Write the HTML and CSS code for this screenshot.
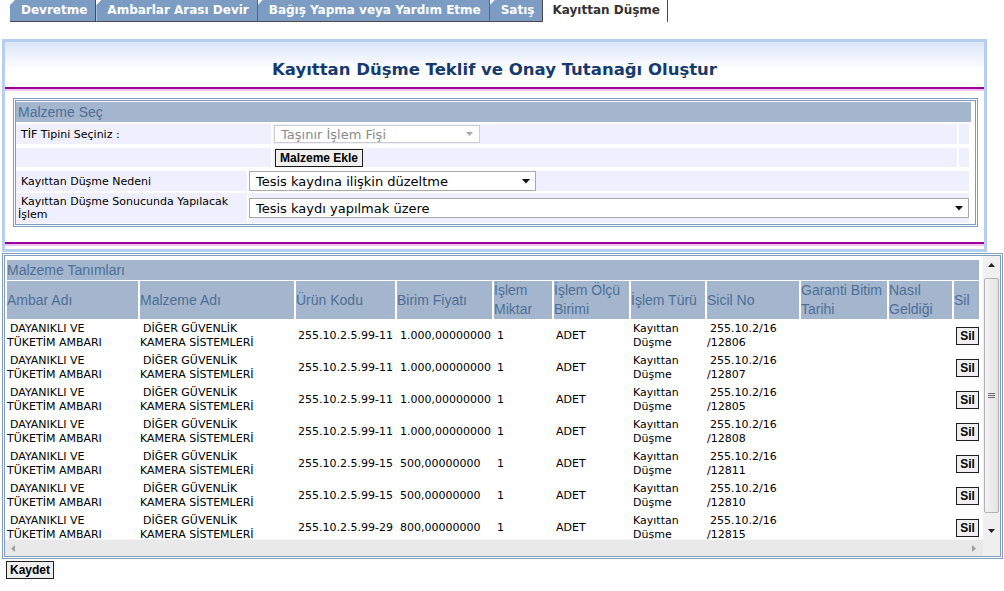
FILE: index.html
```html
<!DOCTYPE html>
<html lang="tr">
<head>
<meta charset="utf-8">
<title>Kayıttan Düşme</title>
<link rel="stylesheet" href="styles.css">
</head>
<body>
<div class="tabs">
  <div class="tab">Devretme</div>
  <div class="tab">Ambarlar Arası Devir</div>
  <div class="tab">Bağış Yapma veya Yardım Etme</div>
  <div class="tab">Satış</div>
  <div class="tab active">Kayıttan Düşme</div>
</div>

<div class="panel">
  <h1 class="title">Kayıttan Düşme Teklif ve Onay Tutanağı Oluştur</h1>
  <div class="rule"></div>
  <div class="box">
    <div class="box-head">Malzeme Seç</div>
    <div class="grid-a">
      <div class="cell label">TİF Tipini Seçiniz :</div>
      <div class="cell"><div class="select disabled sel-tif"><span>Taşınır İşlem Fişi</span><svg width="7" height="4" viewBox="0 0 7 4"><path d="M0 0h7L3.5 4z" fill="#a8a8a8"/></svg></div></div>
      <div class="cell"></div>
      <div class="cell"></div>
      <div class="cell"><button class="btn btn-add">Malzeme Ekle</button></div>
      <div class="cell"></div>
    </div>
    <div class="grid-b">
      <div class="cell label">Kayıttan Düşme Nedeni</div>
      <div class="cell"><div class="select sel-neden"><span>Tesis kaydına ilişkin düzeltme</span><svg width="8" height="5" viewBox="0 0 8 5"><path d="M0 0h8L4 4.5z" fill="#111"/></svg></div></div>
      <div class="cell label">Kayıttan Düşme Sonucunda Yapılacak İşlem</div>
      <div class="cell"><div class="select sel-wide"><span>Tesis kaydı yapılmak üzere</span><svg width="8" height="5" viewBox="0 0 8 5"><path d="M0 0h8L4 4.5z" fill="#111"/></svg></div></div>
    </div>
  </div>
  <div class="rule rule-bottom"></div>
</div>

<div class="list">
  <div class="scroll">
    <div class="viewport">
      <div class="table">
        <div class="table-title">Malzeme Tanımları</div>
        <div class="th">Ambar Adı</div>
        <div class="th">Malzeme Adı</div>
        <div class="th">Ürün Kodu</div>
        <div class="th">Birim Fiyatı</div>
        <div class="th">İşlem Miktar</div>
        <div class="th">İşlem Ölçü Birimi</div>
        <div class="th">İşlem Türü</div>
        <div class="th">Sicil No</div>
        <div class="th">Garanti Bitim Tarihi</div>
        <div class="th">Nasıl Geldiği</div>
        <div class="th">Sil</div>

        <div class="td ind">DAYANIKLI VE TÜKETİM AMBARI</div>
        <div class="td ind">DİĞER GÜVENLİK KAMERA SİSTEMLERİ</div>
        <div class="td nw p2">255.10.2.5.99-11</div>
        <div class="td nw p3">1.000,00000000</div>
        <div class="td p3">1</div>
        <div class="td p2">ADET</div>
        <div class="td p2">Kayıttan Düşme</div>
        <div class="td ind">255.10.2/16 /12806</div>
        <div class="td"></div>
        <div class="td"></div>
        <div class="td del"><button class="btn btn-sil">Sil</button></div>

        <div class="td ind">DAYANIKLI VE TÜKETİM AMBARI</div>
        <div class="td ind">DİĞER GÜVENLİK KAMERA SİSTEMLERİ</div>
        <div class="td nw p2">255.10.2.5.99-11</div>
        <div class="td nw p3">1.000,00000000</div>
        <div class="td p3">1</div>
        <div class="td p2">ADET</div>
        <div class="td p2">Kayıttan Düşme</div>
        <div class="td ind">255.10.2/16 /12807</div>
        <div class="td"></div>
        <div class="td"></div>
        <div class="td del"><button class="btn btn-sil">Sil</button></div>

        <div class="td ind">DAYANIKLI VE TÜKETİM AMBARI</div>
        <div class="td ind">DİĞER GÜVENLİK KAMERA SİSTEMLERİ</div>
        <div class="td nw p2">255.10.2.5.99-11</div>
        <div class="td nw p3">1.000,00000000</div>
        <div class="td p3">1</div>
        <div class="td p2">ADET</div>
        <div class="td p2">Kayıttan Düşme</div>
        <div class="td ind">255.10.2/16 /12805</div>
        <div class="td"></div>
        <div class="td"></div>
        <div class="td del"><button class="btn btn-sil">Sil</button></div>

        <div class="td ind">DAYANIKLI VE TÜKETİM AMBARI</div>
        <div class="td ind">DİĞER GÜVENLİK KAMERA SİSTEMLERİ</div>
        <div class="td nw p2">255.10.2.5.99-11</div>
        <div class="td nw p3">1.000,00000000</div>
        <div class="td p3">1</div>
        <div class="td p2">ADET</div>
        <div class="td p2">Kayıttan Düşme</div>
        <div class="td ind">255.10.2/16 /12808</div>
        <div class="td"></div>
        <div class="td"></div>
        <div class="td del"><button class="btn btn-sil">Sil</button></div>

        <div class="td ind">DAYANIKLI VE TÜKETİM AMBARI</div>
        <div class="td ind">DİĞER GÜVENLİK KAMERA SİSTEMLERİ</div>
        <div class="td nw p2">255.10.2.5.99-15</div>
        <div class="td nw p3">500,00000000</div>
        <div class="td p3">1</div>
        <div class="td p2">ADET</div>
        <div class="td p2">Kayıttan Düşme</div>
        <div class="td ind">255.10.2/16 /12811</div>
        <div class="td"></div>
        <div class="td"></div>
        <div class="td del"><button class="btn btn-sil">Sil</button></div>

        <div class="td ind">DAYANIKLI VE TÜKETİM AMBARI</div>
        <div class="td ind">DİĞER GÜVENLİK KAMERA SİSTEMLERİ</div>
        <div class="td nw p2">255.10.2.5.99-15</div>
        <div class="td nw p3">500,00000000</div>
        <div class="td p3">1</div>
        <div class="td p2">ADET</div>
        <div class="td p2">Kayıttan Düşme</div>
        <div class="td ind">255.10.2/16 /12810</div>
        <div class="td"></div>
        <div class="td"></div>
        <div class="td del"><button class="btn btn-sil">Sil</button></div>

        <div class="td ind">DAYANIKLI VE TÜKETİM AMBARI</div>
        <div class="td ind">DİĞER GÜVENLİK KAMERA SİSTEMLERİ</div>
        <div class="td nw p2">255.10.2.5.99-29</div>
        <div class="td nw p3">800,00000000</div>
        <div class="td p3">1</div>
        <div class="td p2">ADET</div>
        <div class="td p2">Kayıttan Düşme</div>
        <div class="td ind">255.10.2/16 /12815</div>
        <div class="td"></div>
        <div class="td"></div>
        <div class="td del"><button class="btn btn-sil">Sil</button></div>
      </div>
    </div>
    <div class="vbar">
      <div class="sb-btn"><svg width="7" height="4" viewBox="0 0 7 4"><path d="M0 4h7L3.5 0z" fill="#222"/></svg></div>
      <div class="thumb"><svg width="7" height="6" viewBox="0 0 7 6"><path d="M0 .5h7M0 2.5h7M0 4.5h7" stroke="#6a6a6a" stroke-width="1"/></svg></div>
      <div class="sb-btn sb-down"><svg width="7" height="4" viewBox="0 0 7 4"><path d="M0 0h7L3.5 4z" fill="#222"/></svg></div>
    </div>
    <div class="hbar">
      <svg width="4" height="7" viewBox="0 0 4 7"><path d="M4 0v7L0 3.5z" fill="#a0a0a0"/></svg>
      <svg width="4" height="7" viewBox="0 0 4 7"><path d="M0 0v7L4 3.5z" fill="#a0a0a0"/></svg>
    </div>
    <div class="corner"></div>
  </div>
</div>

<button class="btn btn-save">Kaydet</button>
</body>
</html>
```

FILE: styles.css
```css
* { box-sizing: border-box; }

body {
  margin: 0;
  font-family: "DejaVu Sans", Verdana, sans-serif;
  font-size: 11px;
  color: #000;
  background: #fff;
}

/* tabs */
.tabs {
  display: flex;
  padding-left: 10px;
  height: 22px;
}
.tab {
  height: 22px;
  line-height: 21px;
  padding: 0 8px 0 11px;
  background: #7c9cc4;
  color: #fff;
  font-weight: bold;
  font-size: 12px;
  white-space: nowrap;
  border-right: 1px solid #4a4a4a;
  border-bottom: 1px solid #4a4a4a;
  clip-path: polygon(5px 0, 100% 0, 100% 100%, 0 100%, 0 5px);
}
.tab.active {
  background: #fff;
  color: #333;
  border-bottom: none;
  clip-path: none;
  padding: 0 7px 0 9px;
}

/* top panel */
.panel {
  margin: 17px 0 0 2px;
  width: 985px;
  border: 3px solid #b5cff1;
  background: linear-gradient(#dae6f7, #ffffff 28px);
  padding-bottom: 3px;
}
.title {
  margin: 0;
  height: 45px;
  padding-top: 11px;
  line-height: 34px;
  text-align: center;
  font-size: 16.5px;
  font-weight: bold;
  color: #163a70;
}
.rule {
  height: 4px;
  border-top: 2px solid #990099;
  background: #f2c4f2;
}
.rule-bottom { margin-top: 15px; }

.box {
  margin: 7px 6px 0 8px;
  border: 3px double #7f9cc0;
  padding: 1px 4px 1px 0;
}
.box-head {
  height: 20px;
  line-height: 20px;
  padding-left: 2px;
  background: #a4b6cd;
  color: #4d6f97;
  font-family: "Liberation Sans", Arial, sans-serif;
  font-size: 14px;
}
.grid-a {
  display: grid;
  grid-template-columns: 255px 1fr 10px;
  grid-template-rows: 20px 19px;
  column-gap: 2px;
  row-gap: 4px;
  margin: 2px 2px 0 0;
}
.grid-b {
  display: grid;
  grid-template-columns: 231px 1fr;
  grid-template-rows: 20px 30px;
  column-gap: 2px;
  row-gap: 2px;
  margin: 4px 2px 0 0;
}
.cell {
  background: #efeffd;
  display: flex;
  align-items: center;
}
.label {
  padding-left: 2px;
  text-indent: 3px;
  line-height: 13px;
}

.select {
  display: flex;
  align-items: center;
  justify-content: space-between;
  background: #fff;
  border: 1px solid #a9a9a9;
  font-size: 13px;
  padding: 0 5px 0 6px;
  white-space: nowrap;
}
.select.disabled {
  border-color: #cdcdcd;
  color: #8a8a8a;
}
.sel-tif { width: 206px; height: 18px; margin-left: 1px; padding-right: 6px; }
.sel-neden { width: 287px; height: 20px; }
.sel-wide { width: 720px; height: 20px; }

.btn {
  font-family: "Liberation Sans", Arial, sans-serif;
  font-weight: bold;
  font-size: 12px;
  color: #000;
  background: #efefef;
  border: 1px solid #1e1e1e;
  padding: 0 4px;
  height: 18px;
  line-height: 16px;
  cursor: default;
}
.btn-add { margin-left: 2px; }
.btn-sil { width: 23px; padding: 0; margin-left: 2px; }
.btn-save { margin: 2px 0 0 6px; width: 48px; padding: 0; }

/* list panel */
.list {
  margin: 1px 0 0 2px;
  width: 1001px;
  border: 3px double #7f9cc0;
}
.scroll {
  display: grid;
  grid-template-columns: 1fr 17px;
  grid-template-rows: 283px 17px;
}
.viewport {
  overflow: hidden;
  padding: 4px 0 0 2px;
}
.table {
  display: grid;
  grid-template-columns: 131px 154px 99px 95px 58px 75px 74px 92px 86px 63px 25px;
  column-gap: 2px;
  row-gap: 1px;
  width: max-content;
}
.table-title {
  grid-column: 1 / -1;
  height: 20px;
  line-height: 20px;
  background: #a4b6cd;
  color: #4d6f97;
  font-family: "Liberation Sans", Arial, sans-serif;
  font-size: 14px;
}
.th {
  height: 38px;
  display: flex;
  align-items: center;
  background: #a4b6cd;
  color: #4d6f97;
  font-family: "Liberation Sans", Arial, sans-serif;
  font-size: 14px;
  line-height: 19px;
}
.td {
  height: 31px;
  display: flex;
  align-items: center;
  line-height: 14px;
  padding-right: 4px;
}
.td.ind { text-indent: 3px; padding-right: 12px; }
.td.nw { white-space: nowrap; padding-right: 0; }
.td.p2 { padding-left: 2px; }
.td.p3 { padding-left: 3px; }
.td.del { padding: 0; }

/* scrollbars */
.vbar {
  background: #f0f0f0;
  display: flex;
  flex-direction: column;
  align-items: center;
}
.sb-btn {
  height: 17px;
  width: 17px;
  display: flex;
  align-items: center;
  justify-content: center;
}
.sb-down { margin-top: auto; }
.thumb {
  margin-top: 5px;
  width: 15px;
  height: 235px;
  border: 1px solid #b3b3b3;
  border-radius: 2px;
  background: linear-gradient(90deg, #f4f4f4, #e3e3e3);
  display: flex;
  align-items: center;
  justify-content: center;
}
.hbar {
  display: flex;
  justify-content: space-between;
  align-items: center;
  padding: 0 7px 0 6px;
  background: #e9e9e9;
  border-top: 1px solid #f6f6f6;
}
.corner { background: #f0f0f0; }
```
